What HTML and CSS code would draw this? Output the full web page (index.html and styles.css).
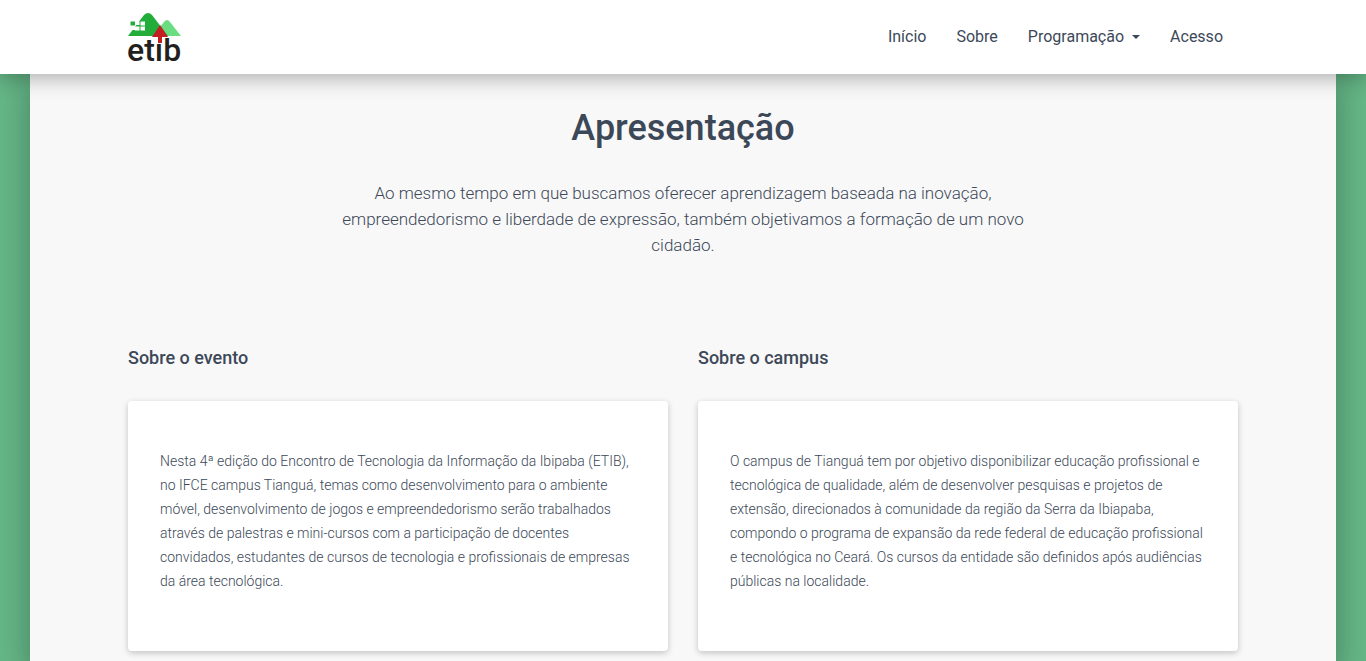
FILE: index.html
```html
<!DOCTYPE html>
<html lang="pt-BR">
<head>
<meta charset="utf-8">
<meta name="viewport" content="width=device-width, initial-scale=1">
<title>ETIB</title>
<link rel="stylesheet" href="styles.css">
</head>
<body>
<header class="navbar">
  <div class="container navbar-inner">
    <a class="brand" href="#" aria-label="etib">
      <svg class="logo" width="54" height="50" viewBox="0 0 54 50">
        <path class="hill-light" d="M25 24 36 10Q39 6 42 10L53 24Z"/>
        <path class="hill" d="M0 24 16 3Q20-1 24 3L40 24Z"/>
        <path class="pixels" d="M0 7h7v11H0zM7 9.500h4.500v3.500H7zM12.500 9.500h4.500v4h-4.500zM7 14.500h4.500v4H7zM12.500 14.500h4.500v4h-4.500z"/>
        <path class="hill" d="M2.500 9.500h4.500v4H2.500z"/>
        <path class="arrow" d="M32 13 40 25H34V31H30V25H24Z"/>
        <text class="wordmark" x="-1" y="49">etıb</text>
      </svg>
    </a>
    <nav class="menu">
      <a class="menu-link" href="#">Início</a>
      <a class="menu-link" href="#">Sobre</a>
      <button class="menu-link" type="button" aria-haspopup="true">Programação<span class="caret"></span></button>
      <a class="menu-link" href="#">Acesso</a>
    </nav>
  </div>
</header>
<main class="main">
  <div class="container">
    <section class="intro">
      <h1 class="title">Apresentação</h1>
      <p class="lead">Ao mesmo tempo em que buscamos oferecer aprendizagem baseada na inovação, empreendedorismo e liberdade de expressão, também objetivamos a formação de um novo cidadão.</p>
    </section>
    <div class="columns">
      <section class="column">
        <h2 class="subtitle">Sobre o evento</h2>
        <div class="card">
          <p class="card-text">Nesta 4ª edição do Encontro de Tecnologia da Informação da Ibipaba (ETIB), no IFCE campus Tianguá, temas como desenvolvimento para o ambiente móvel, desenvolvimento de jogos e empreendedorismo serão trabalhados através de palestras e mini-cursos com a participação de docentes convidados, estudantes de cursos de tecnologia e profissionais de empresas da área tecnológica.</p>
        </div>
      </section>
      <section class="column">
        <h2 class="subtitle">Sobre o campus</h2>
        <div class="card">
          <p class="card-text">O campus de Tianguá tem por objetivo disponibilizar educação profissional e tecnológica de qualidade, além de desenvolver pesquisas e projetos de extensão, direcionados à comunidade da região da Serra da Ibiapaba, compondo o programa de expansão da rede federal de educação profissional e tecnológica no Ceará. Os cursos da entidade são definidos após audiências públicas na localidade.</p>
        </div>
      </section>
    </div>
  </div>
</main>
</body>
</html>
```
FILE: styles.css
```css
* {
  box-sizing: border-box;
}

body {
  display: flex;
  flex-direction: column;
  min-height: 100vh;
  margin: 0;
  overflow-x: hidden;
  background: #65b687;
  color: #3c4858;
  font-family: Roboto, "Liberation Sans", sans-serif;
  font-weight: 300;
}

.container {
  width: 100%;
  max-width: 1140px;
  margin: 0 auto;
  padding: 0 15px;
}

.navbar {
  position: sticky;
  top: 0;
  z-index: 1;
  background: #fff;
  box-shadow: 0 4px 20px 0 rgba(0, 0, 0, .3);
}

.navbar-inner {
  display: flex;
  align-items: center;
  justify-content: space-between;
  padding-top: 12px;
  padding-bottom: 12px;
}

.brand,
.logo {
  display: block;
}

.logo {
  overflow: visible;
}

.hill {
  fill: #22ad3b;
}

.hill-light {
  fill: #6add80;
}

.pixels {
  fill: #fff;
}

.arrow {
  fill: #c41e25;
}

.wordmark {
  fill: #231f20;
  font-family: Roboto, sans-serif;
  font-size: 32px;
  font-weight: 500;
}

.menu {
  display: flex;
}

.menu-link {
  display: flex;
  align-items: center;
  padding: 10px 15px;
  border: 0;
  background: none;
  color: #3c4858;
  font: 400 16px/20px Roboto, sans-serif;
  text-decoration: none;
}

.caret {
  margin-left: 8px;
  border: 4px solid transparent;
  border-top-color: currentColor;
  border-bottom: 0;
}

.main {
  flex: 1;
  margin: 0 30px;
  padding: 24px 0 10px;
  background: #f8f8f8;
  box-shadow: 0 16px 24px 2px rgba(0, 0, 0, .14), 0 6px 30px 5px rgba(0, 0, 0, .12);
}

.intro {
  max-width: 700px;
  margin: 0 auto 87px;
  text-align: center;
}

.title {
  margin: 0;
  font-size: 36px;
  font-weight: 500;
  line-height: 60px;
}

.lead {
  margin: 22px 0 0;
  font-size: 17px;
  line-height: 26px;
}

.columns {
  display: grid;
  grid-template-columns: repeat(auto-fit, minmax(300px, 1fr));
  gap: 30px;
}

.subtitle {
  margin: 0 0 30px;
  font-size: 18px;
  font-weight: 500;
  line-height: 26px;
}

.card {
  padding: 48px 32px 58px;
  border-radius: 4px;
  background: #fff;
  box-shadow: 0 2px 6px 0 rgba(0, 0, 0, .22);
}

.card-text {
  margin: 0;
  font-size: 14px;
  line-height: 24px;
}
```
